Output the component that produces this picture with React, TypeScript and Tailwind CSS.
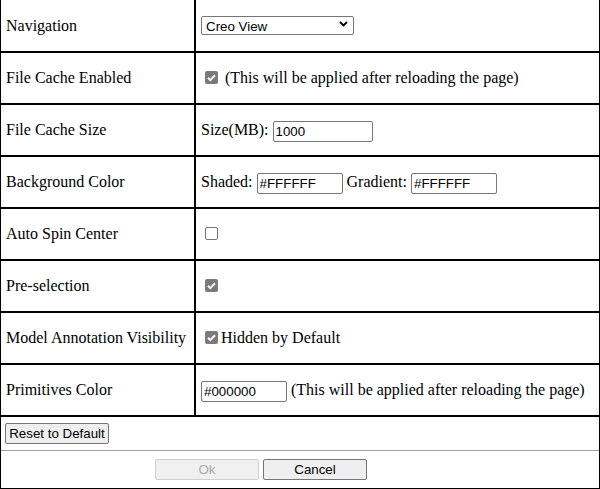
import React from 'react';

/**
 * Viewer preferences dialog: a two-column settings table with
 * reset and confirm buttons below it.
 */

const serif = "font-['Liberation_Serif','Times_New_Roman',serif] text-[16px] text-black";
const control = "font-['Liberation_Sans',Arial,sans-serif] text-[13.33px]";

const inputCls = `${control} text-black h-[21px] px-[2px] border border-[#767676] rounded-[2px] bg-white outline-none align-middle`;
const buttonCls = `${control} h-[21px] w-[104px] border rounded-[2px]`;

interface CheckProps {
  checked?: boolean;
  disabled?: boolean;
}

/** Checkbox drawn to match the greyed Windows look */
const Check: React.FC<CheckProps> = ({ checked, disabled }) => (
  <span className="relative inline-block ml-1 mr-[3px] w-[13px] h-[13px] align-[-1px]">
    <input
      type="checkbox"
      defaultChecked={checked}
      disabled={disabled}
      className={`appearance-none block w-[13px] h-[13px] m-0 rounded-[2px] ${
        checked ? 'bg-[#7a7a7a]' : 'bg-white border border-[#767676]'
      }`}
    />
    {checked && (
      <svg
        className="absolute left-0 top-0 pointer-events-none"
        width="13"
        height="13"
        viewBox="0 0 13 13"
        fill="none"
      >
        <path d="M3 6.8l2.3 2.3L10 4.2" stroke="#fff" strokeWidth="2" />
      </svg>
    )}
  </span>
);

interface RowProps {
  label: string;
  first?: boolean;
  children: React.ReactNode;
}

const Row: React.FC<RowProps> = ({ label, first, children }) => (
  <tr className="h-[52px]">
    <td className={`w-[194px] px-[5px] border-r border-b border-black ${first ? '' : 'border-t'}`}>
      {label}
    </td>
    <td className={`px-[5px] border-l border-b border-black ${first ? '' : 'border-t'}`}>
      {children}
    </td>
  </tr>
);

export default function App() {
  return (
    <div className={`w-[600px] bg-white border-x border-b border-black ${serif}`}>
      <table className="w-full border-separate border-spacing-0">
        <tbody>
          <Row label="Navigation" first>
            <div className="relative inline-block align-middle">
              <select
                className={`${control} text-black appearance-none w-[153px] h-[19px] pl-[4px] border border-[#767676] rounded-[2px] bg-white outline-none`}
                defaultValue="creo"
              >
                <option value="creo">Creo View</option>
              </select>
              <svg
                className="absolute right-[6px] top-[7px] pointer-events-none"
                width="9"
                height="6"
                viewBox="0 0 9 6"
                fill="none"
              >
                <path d="M1 1l3.5 3.5L8 1" stroke="#000" strokeWidth="1.8" />
              </svg>
            </div>
          </Row>
          <Row label="File Cache Enabled">
            <Check checked disabled /> (This will be applied after reloading the page)
          </Row>
          <Row label="File Cache Size">
            Size(MB): <input type="text" defaultValue="1000" className={`${inputCls} w-[100px]`} />
          </Row>
          <Row label="Background Color">
            Shaded: <input type="text" defaultValue="#FFFFFF" className={`${inputCls} w-[86px]`} />{' '}
            Gradient: <input type="text" defaultValue="#FFFFFF" className={`${inputCls} w-[86px]`} />
          </Row>
          <Row label="Auto Spin Center">
            <Check />
          </Row>
          <Row label="Pre-selection">
            <Check checked disabled />
          </Row>
          <Row label="Model Annotation Visibility">
            <Check checked disabled />
            Hidden by Default
          </Row>
          <Row label="Primitives Color">
            <input type="text" defaultValue="#000000" className={`${inputCls} w-[86px]`} />{' '}
            (This will be applied after reloading the page)
          </Row>
        </tbody>
      </table>

      {/* Reset row */}
      <div className="h-[34px] border-t border-black pt-[4px] pl-[4px]">
        <button className={`${buttonCls} text-black border-[#767676] bg-[#efefef]`}>Reset to Default</button>
      </div>

      {/* Dialog buttons */}
      <div className="h-[38px] border-t border-[#a0a0a0] flex items-center justify-center gap-1 pr-[78px]">
        <button disabled className={`${buttonCls} border-[#cfcfcf] bg-[#f0f0f0] text-[#a9a9a9]`}>
          Ok
        </button>
        <button className={`${buttonCls} text-black border-[#767676] bg-[#efefef]`}>Cancel</button>
      </div>
    </div>
  );
}
